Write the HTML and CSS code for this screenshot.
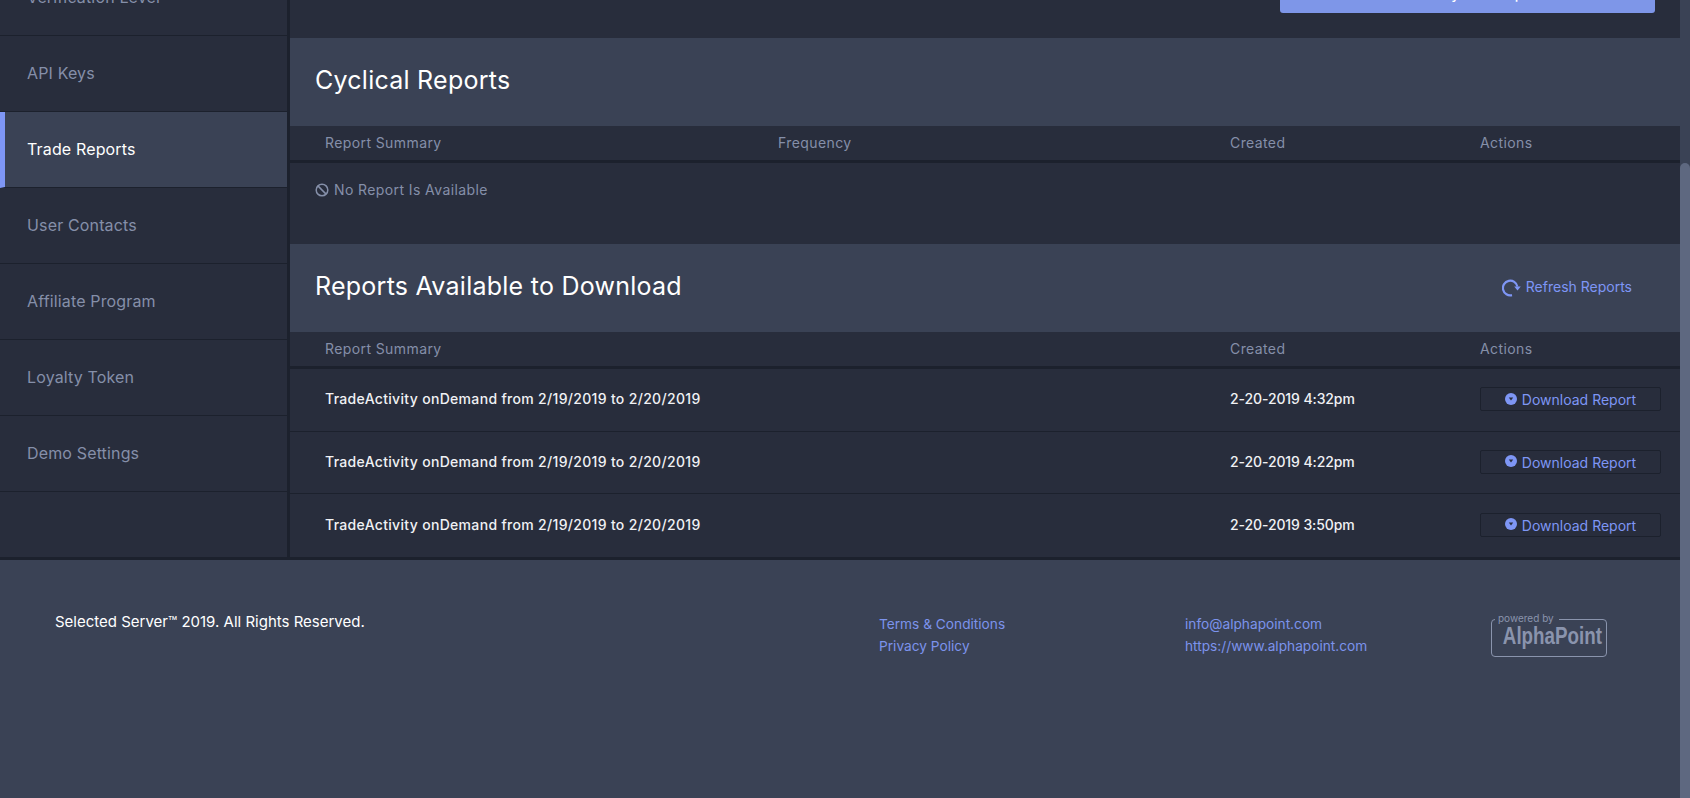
FILE: index.html
```html
<!DOCTYPE html>
<html>
<head>
	<title>Trade Reports</title>
	<meta charset="UTF-8">
	<link rel="stylesheet" href="styles.css">
</head>
<body>
	<div id="page">
		<div id="mainRow">
			<div id="sideMenu">
				<a class="menuItem firstItem">Verification Level</a>
				<a class="menuItem">API Keys</a>
				<a class="menuItem selectedItem">Trade Reports</a>
				<a class="menuItem">User Contacts</a>
				<a class="menuItem">Affiliate Program</a>
				<a class="menuItem">Loyalty Token</a>
				<a class="menuItem">Demo Settings</a>
			</div>

			<div id="reportsPage">
				<div id="topStrip">
					<div id="createButton"><span>Create Cyclical Report</span></div>
				</div>

				<div class="panelHeader">
					<h2>Cyclical Reports</h2>
				</div>
				<div class="tableHead">
					<span class="colSummary colShort">Report Summary</span>
					<span class="colFrequency">Frequency</span>
					<span class="colCreated">Created</span>
					<span class="colActions">Actions</span>
				</div>
				<div id="emptyRow">
					<svg class="emptyIcon" viewBox="0 0 14 14"><circle cx="7" cy="7" r="5.8"/><path d="M2.9 2.9l8.2 8.2"/></svg>
					<span>No Report Is Available</span>
				</div>

				<div class="panelHeader">
					<h2>Reports Available to Download</h2>
					<a id="refreshLink">
						<svg viewBox="0 0 19 18"><path d="M10 16.1A7.3 7.3 0 1 1 15.4 7.6"/><path class="arrowHead" d="M12.2 7.6h6.6l-3.3 4z"/></svg>
						Refresh Reports
					</a>
				</div>
				<div class="tableHead">
					<span class="colSummary">Report Summary</span>
					<span class="colCreated">Created</span>
					<span class="colActions">Actions</span>
				</div>
				<div class="reportRow">
					<span class="colSummary">TradeActivity onDemand from 2/19/2019 to 2/20/2019</span>
					<span class="colCreated">2-20-2019 4:32pm</span>
					<span class="colActions"><a class="downloadButton"><svg viewBox="0 0 12 12"><circle cx="6" cy="6" r="6"/><path class="notch" d="M3.8 4.6h4.4L6 7.6z"/></svg><span class="buttonText">Download Report</span></a></span>
				</div>
				<div class="reportRow">
					<span class="colSummary">TradeActivity onDemand from 2/19/2019 to 2/20/2019</span>
					<span class="colCreated">2-20-2019 4:22pm</span>
					<span class="colActions"><a class="downloadButton"><svg viewBox="0 0 12 12"><circle cx="6" cy="6" r="6"/><path class="notch" d="M3.8 4.6h4.4L6 7.6z"/></svg><span class="buttonText">Download Report</span></a></span>
				</div>
				<div class="reportRow">
					<span class="colSummary">TradeActivity onDemand from 2/19/2019 to 2/20/2019</span>
					<span class="colCreated">2-20-2019 3:50pm</span>
					<span class="colActions"><a class="downloadButton"><svg viewBox="0 0 12 12"><circle cx="6" cy="6" r="6"/><path class="notch" d="M3.8 4.6h4.4L6 7.6z"/></svg><span class="buttonText">Download Report</span></a></span>
				</div>
			</div>
		</div>

		<div id="footer">
			<div id="copyright">Selected Server™ 2019. All Rights Reserved.</div>
			<div class="footerLinks linksLegal">
				<a>Terms &amp; Conditions</a>
				<a>Privacy Policy</a>
			</div>
			<div class="footerLinks linksContact">
				<a>info@alphapoint.com</a>
				<a>https://www.alphapoint.com</a>
			</div>
			<div id="poweredBy">
				<span id="poweredText">powered by</span>
				<span id="poweredName">AlphaPoint</span>
			</div>
		</div>
	</div>

	<div id="scrollTrack">
		<div id="scrollThumb"></div>
	</div>
</body>
</html>
```

FILE: styles.css
```css
html, body
{
	height: 100%;
	margin: 0px;
	padding: 0px;
}

body
{
	display: flex;
	height: 798px;
	overflow: hidden;
	background-color: #3a4255;
	color: #fff;
	font-family: Inter, "Liberation Sans", sans-serif;
}

#page
{
	flex: 1;
	min-width: 0;
	display: flex;
	flex-direction: column;
}

#mainRow
{
	display: flex;
	flex: none;
	height: 557px;
	border-bottom: 3px solid #1c212d;
}

/* side menu */
#sideMenu
{
	width: 290px;
	box-sizing: border-box;
	flex: none;
	background-color: #282d3c;
	border-right: 3px solid #1c212d;
	overflow: hidden;
}

.menuItem
{
	display: flex;
	align-items: center;
	box-sizing: border-box;
	height: 76px;
	padding: 0 0 1px 27px;
	border-bottom: 1px solid #1c212d;
	color: #858fa9;
	font-size: 16px;
	letter-spacing: 0.15px;
}

.firstItem
{
	margin-top: -40px;
}

.selectedItem
{
	padding-left: 22px;
	border-left: 5px solid #7e96f5;
	background-color: #3a4255;
	color: #fff;
}

/* reports */
#reportsPage
{
	flex: 1;
	min-width: 0;
	background-color: #282d3c;
}

#topStrip
{
	display: flex;
	justify-content: flex-end;
	height: 38px;
	padding-right: 25px;
}

#createButton
{
	width: 375px;
	height: 13px;
	border-radius: 0 0 3px 3px;
	background-color: #7e96e8;
	color: #fff;
	font-size: 14px;
	font-weight: 500;
	text-align: center;
	overflow: hidden;
}

#createButton span
{
	display: block;
	margin-top: -13px;
	line-height: 14px;
}

.panelHeader
{
	display: flex;
	align-items: center;
	justify-content: space-between;
	box-sizing: border-box;
	height: 88px;
	padding: 0 25px 4px 25px;
	background-color: #3a4255;
}

.panelHeader h2
{
	margin: 0px;
	font-size: 25px;
	font-weight: 400;
	letter-spacing: 0.25px;
}

#refreshLink
{
	display: flex;
	align-items: center;
	gap: 5px;
	margin-right: 23px;
	color: #7e96f5;
	font-size: 14px;
}

#refreshLink svg
{
	width: 19px;
	height: 18px;
	margin-top: 3px;
	fill: none;
	stroke: #7e96f5;
	stroke-width: 2.2;
}

#refreshLink .arrowHead
{
	fill: #7e96f5;
	stroke: none;
}

.tableHead
{
	display: flex;
	align-items: center;
	box-sizing: border-box;
	height: 37px;
	padding: 0 0 2px 35px;
	border-bottom: 3px solid #1c212d;
	color: #858fa9;
	font-size: 14px;
	letter-spacing: 0.4px;
}

.colSummary
{
	flex: 1;
}

.colShort
{
	flex: none;
	width: 453px;
}

.colFrequency
{
	flex: 1;
}

.colCreated
{
	width: 250px;
	flex: none;
}

.colActions
{
	width: 200px;
	flex: none;
}

#emptyRow
{
	display: flex;
	align-items: flex-start;
	gap: 5px;
	height: 81px;
	padding: 18px 0 0 25px;
	box-sizing: border-box;
	color: #858fa9;
	font-size: 14px;
	letter-spacing: 0.4px;
}

.emptyIcon
{
	width: 14px;
	height: 14px;
	margin-top: 2px;
	fill: none;
	stroke: #858fa9;
	stroke-width: 1.5;
}

.reportRow
{
	display: flex;
	align-items: center;
	box-sizing: border-box;
	height: 63px;
	padding-left: 35px;
	border-bottom: 1px solid #1c212d;
	color: #f0f1f4;
	font-size: 14px;
	font-weight: 450;
}

.reportRow + .reportRow
{
	height: 62px;
}

.reportRow:last-child
{
	height: 63px;
	border-bottom: none;
}

.reportRow .colSummary
{
	margin-bottom: 3px;
	letter-spacing: 0.32px;
}

.reportRow .colCreated
{
	margin-bottom: 3px;
	letter-spacing: -0.1px;
}

.reportRow .colActions
{
	margin-bottom: 2px;
}

.downloadButton
{
	display: flex;
	align-items: center;
	justify-content: center;
	gap: 5px;
	box-sizing: border-box;
	width: 181px;
	height: 24px;
	border: 1px solid #1c212d;
	border-radius: 2px;
	color: #7e96f5;
	font-weight: 400;
}

.downloadButton svg
{
	width: 12px;
	height: 12px;
	margin-top: -1px;
	fill: #7e96f5;
}

.buttonText
{
	margin-top: 1px;
}

.downloadButton .notch
{
	fill: #282d3c;
}

/* footer */
#footer
{
	display: flex;
	align-items: flex-start;
	flex: 1;
	padding: 52px 0 0 55px;
	background-color: #3a4255;
	font-size: 14px;
}

#copyright
{
	width: 824px;
	flex: none;
	font-size: 15px;
}

.footerLinks
{
	display: flex;
	flex-direction: column;
	gap: 5.5px;
	flex: none;
	margin-top: 4px;
	color: #7c93ec;
	font-size: 13.7px;
}

.linksLegal
{
	width: 306px;
}

.linksContact
{
	width: 306px;
}

#poweredBy
{
	position: relative;
	box-sizing: border-box;
	width: 116px;
	height: 38px;
	margin-top: 7px;
	border: 1px solid #8a94ad;
	border-radius: 4px;
	text-align: center;
}

#poweredText
{
	position: absolute;
	top: -8px;
	left: 3px;
	padding: 0 5px 0 3px;
	background-color: #3a4255;
	color: #8a94ad;
	font-size: 10px;
	line-height: 12px;
}

#poweredName
{
	display: block;
	margin-right: 6px;
	transform: scaleX(0.8);
	color: #8a94ad;
	font-family: "Liberation Sans", sans-serif;
	font-size: 23.5px;
	font-weight: 700;
	line-height: 33px;
}

/* scrollbar */
#scrollTrack
{
	width: 10px;
	flex: none;
	padding-top: 163px;
	box-sizing: border-box;
	background-color: #3a4255;
}

#scrollThumb
{
	height: 100%;
	border-radius: 5px 5px 0 0;
	background-color: #5e6880;
}
```
